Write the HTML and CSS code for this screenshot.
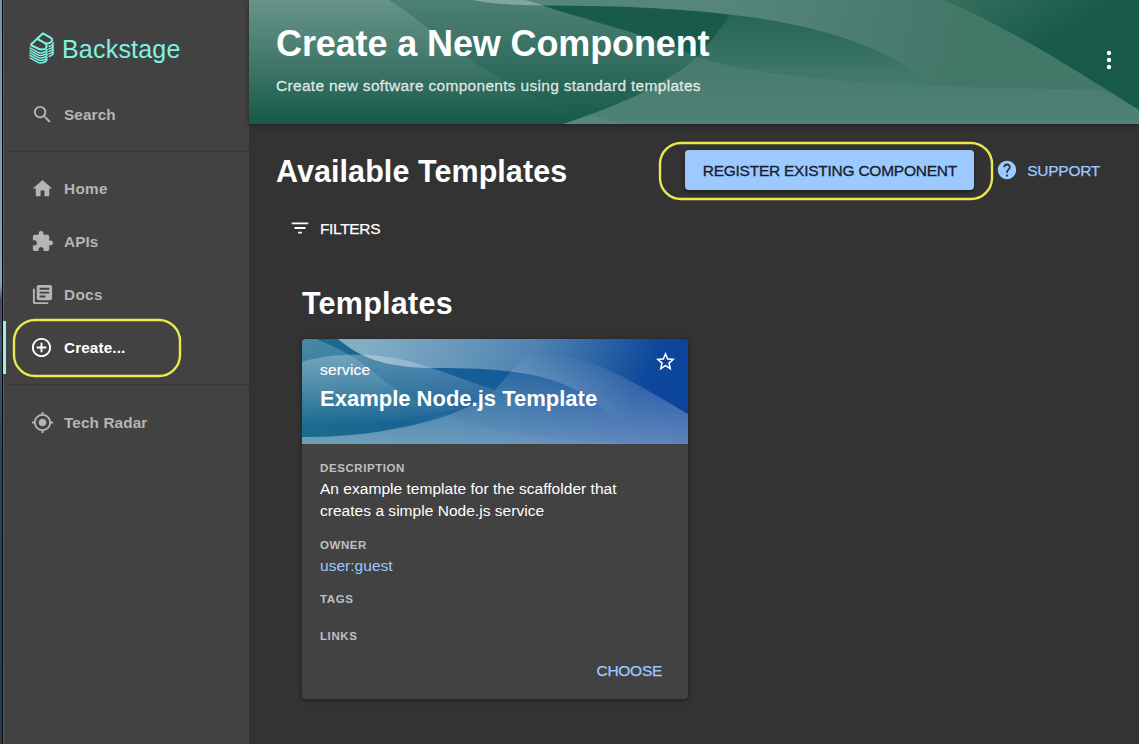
FILE: index.html
```html
<!DOCTYPE html>
<html lang="en">
<head>
<meta charset="utf-8">
<title>Create a New Component</title>
<link rel="stylesheet" href="styles.css">
</head>
<body>
<div class="app">
  <div class="desktop-edge"></div>
  <aside class="sidebar">
    <div class="logo">
      <svg class="logo-mark" viewBox="0 0 26 32" width="26" height="32">
        <g fill="none" stroke="#7df3e1">
          <path stroke-width="2" stroke-linejoin="round" d="M1.500 13 14 1.300 21.800 5.800C25.200 8 22 11.800 17 11.600L8.500 7M15 10.700C19.500 13 18 17.600 13 17.600 11.500 17.600 10 17 9 16.500L1.500 13"/>
          <g stroke-width="1.450">
            <path d="M.5 15.600 8.600 20.200C12 22 18 20.400 18.200 17"/>
            <path d="M.5 18.100 8.600 22.700C12 24.500 18 22.900 18.200 19.500"/>
            <path d="M.5 20.600 8.600 25.200C12 27 18 25.400 18.200 22"/>
            <path d="M.5 23.100 8.600 27.700C12 29.500 18 27.900 18.200 24.500"/>
            <path d="M.5 25.600 8.600 30.200C12 32 17.500 30.400 18.200 27"/>
            <path d="M19.500 14.500C22 14 24.300 12.700 24.500 10.200M19.500 17C22 16.500 24.300 15.200 24.500 12.700M19.500 19.500C22 19 24.300 17.700 24.500 15.200M19.500 22C22 21.500 24.300 20.200 24.500 17.700M19.500 24.500C22 24 24.300 22.700 24.500 20.200"/>
          </g>
        </g>
      </svg>
      <span class="logo-text">Backstage</span>
    </div>
    <a class="item search"><svg viewBox="0 0 24 24"><path d="M15.500 14h-.79l-.28-.27A6.471 6.471 0 0 0 16 9.500 6.500 6.500 0 1 0 9.500 16c1.610 0 3.090-.59 4.230-1.570l.27.28v.79l5 4.990L20.490 19l-4.990-5zm-6 0C7.010 14 5 11.990 5 9.500S7.010 5 9.500 5 14 7.010 14 9.500 11.990 14 9.500 14z"/></svg><span>Search</span></a>
    <div class="rule"></div>
    <nav class="nav">
      <a class="item"><svg viewBox="0 0 24 24"><path d="M10 20v-6h4v6h5v-8h3L12 3 2 12h3v8z"/></svg><span class="wide">Home</span></a>
      <a class="item"><svg viewBox="0 0 24 24"><path d="M20.500 11H19V7c0-1.100-.9-2-2-2h-4V3.500a2.500 2.500 0 0 0-5 0V5H4c-1.100 0-1.990.9-1.990 2v3.800H3.500c1.490 0 2.700 1.210 2.700 2.700s-1.210 2.700-2.700 2.700H2V20c0 1.100.9 2 2 2h3.800v-1.500c0-1.490 1.210-2.700 2.700-2.700s2.700 1.210 2.700 2.700V22H17c1.100 0 2-.9 2-2v-4h1.500a2.500 2.500 0 0 0 0-5z"/></svg><span>APIs</span></a>
      <a class="item"><svg viewBox="0 0 24 24"><path d="M4 6H2v14c0 1.100.9 2 2 2h14v-2H4V6zm16-4H8c-1.100 0-2 .9-2 2v12c0 1.100.9 2 2 2h12c1.100 0 2-.9 2-2V4c0-1.100-.9-2-2-2zm-1 9H9V9h10v2zm-4 4H9v-2h6v2zm4-8H9V5h10v2z"/></svg><span class="wide">Docs</span></a>
      <a class="item active"><svg viewBox="0 0 24 24"><path d="M13 7h-2v4H7v2h4v4h2v-4h4v-2h-4V7zm-1-5C6.480 2 2 6.480 2 12s4.480 10 10 10 10-4.480 10-10S17.520 2 12 2zm0 18c-4.410 0-8-3.590-8-8s3.590-8 8-8 8 3.590 8 8-3.590 8-8 8z"/></svg><span>Create...</span></a>
    </nav>
    <div class="rule"></div>
    <a class="item radar"><svg viewBox="0 0 24 24"><path d="M12 8c-2.210 0-4 1.790-4 4s1.790 4 4 4 4-1.790 4-4-1.790-4-4-4zm8.940 3A8.994 8.994 0 0 0 13 3.060V1h-2v2.060A8.994 8.994 0 0 0 3.060 11H1v2h2.060A8.994 8.994 0 0 0 11 20.940V23h2v-2.060A8.994 8.994 0 0 0 20.940 13H23v-2h-2.060zM12 19c-3.870 0-7-3.130-7-7s3.130-7 7-7 7 3.130 7 7-3.130 7-7 7z"/></svg><span>Tech Radar</span></a>
    <svg class="mark mark-create" width="172" height="62"><rect x="3" y="3" width="166" height="56" rx="21"/></svg>
  </aside>

  <main class="main">
    <header class="header">
      <svg class="waves" viewBox="249 0 890 124" preserveAspectRatio="none">
        <defs>
          <linearGradient id="h1" x1="0" y1="0" x2="0" y2="124" gradientUnits="userSpaceOnUse"><stop stop-color="#fff" stop-opacity=".15"/><stop offset=".94" stop-color="#fff" stop-opacity="0"/></linearGradient>
          <linearGradient id="h2" x1="0" y1="0" x2="0" y2="124" gradientUnits="userSpaceOnUse"><stop stop-color="#fff" stop-opacity=".23"/><stop offset="1" stop-color="#fff" stop-opacity="0"/></linearGradient>
          <linearGradient id="h3" x1="0" y1="8" x2="0" y2="90" gradientUnits="userSpaceOnUse"><stop stop-color="#fff" stop-opacity=".05"/><stop offset="1" stop-color="#fff" stop-opacity=".2"/></linearGradient>
          <linearGradient id="h4" x1="730" y1="0" x2="960" y2="50" gradientUnits="userSpaceOnUse"><stop stop-color="#56867a"/><stop offset="1" stop-color="#437768"/></linearGradient>
          <linearGradient id="h5" x1="950" y1="-10" x2="1000" y2="75" gradientUnits="userSpaceOnUse"><stop stop-color="#38705f"/><stop offset="1" stop-color="#175a4a"/></linearGradient>
          <linearGradient id="h6" x1="0" y1="60" x2="0" y2="124" gradientUnits="userSpaceOnUse"><stop stop-color="#477b6d"/><stop offset="1" stop-color="#4f8275"/></linearGradient>
        </defs>
        <path fill="#185b4b" d="M249 0H1139V124H249z"/>
        <path fill="url(#h2)" d="M249 0H525C590 22 650 34 697 57C665 85 620 105 563 124H249z"/>
        <path fill="url(#h1)" d="M249 0H389C410 13 430 30 449 45C500 83 560 111 610 124H249z"/>
        <path fill="url(#h5)" d="M930 0H1139V124H1000z"/>
        <path fill="url(#h3)" d="M741 0C728 17 715 38 697 57C765 77 870 84 942 87V0z"/>
        <path fill="url(#h4)" d="M473 0C505 7 550 5 595 6C680 8 800 15 875 50C915 68 935 84 950 107L960 124H1139V110C1080 73 1010 28 944 0z"/>
        <path fill="url(#h6)" d="M563 124C620 105 665 85 697 57C765 77 870 84 962 87L1104 90L1139 110V124z"/>
        <path fill="#83a69b" d="M473 0H525L544 5.300C515 5 490 4 473 0z"/>
        <path fill="#fff" opacity=".05" d="M563 124 592 115 620 124z"/>
      </svg>
      <div class="header-text">
        <h1>Create a New Component</h1>
        <p>Create new software components using standard templates</p>
      </div>
      <svg class="more" viewBox="0 0 6 20" width="6" height="20"><circle cx="3" cy="3" r="2.200"/><circle cx="3" cy="10" r="2.200"/><circle cx="3" cy="17" r="2.200"/></svg>
    </header>
    <section class="content">
      <div class="toolbar">
        <h2>Available Templates</h2>
        <button class="register">REGISTER EXISTING COMPONENT</button>
        <a class="support"><svg viewBox="0 0 24 24"><path d="M12 2C6.480 2 2 6.480 2 12s4.480 10 10 10 10-4.480 10-10S17.520 2 12 2zm1 17h-2v-2h2v2zm2.070-7.750l-.9.920C13.450 12.900 13 13.500 13 15h-2v-.5c0-1.100.45-2.100 1.170-2.830l1.240-1.260c.37-.36.59-.86.59-1.410 0-1.100-.9-2-2-2s-2 .9-2 2H8c0-2.210 1.790-4 4-4s4 1.790 4 4c0 .88-.36 1.680-.93 2.250z"/></svg><span>SUPPORT</span></a>
        <svg class="mark mark-register" width="338" height="62"><rect x="3" y="3" width="332" height="56" rx="21"/></svg>
      </div>
      <div class="filters"><svg viewBox="0 0 24 24"><path d="M10 18h4v-2h-4v2zM3 6v2h18V6H3zm3 7h12v-2H6v2z"/></svg><span>FILTERS</span></div>
      <h2 class="section-title">Templates</h2>
      <article class="card">
        <div class="card-head">
          <svg class="waves" viewBox="0 0 386 105" preserveAspectRatio="none">
            <defs>
              <linearGradient id="c0"><stop stop-color="#1b6c8e"/><stop offset=".5" stop-color="#155c98"/><stop offset="1" stop-color="#0b439c"/></linearGradient>
              <linearGradient id="c1" x1="0" y1="0" x2="0" y2="105" gradientUnits="userSpaceOnUse"><stop stop-color="#fff" stop-opacity=".2"/><stop offset=".85" stop-color="#fff" stop-opacity="0"/></linearGradient>
              <linearGradient id="c2" x1="0" y1="12" x2="0" y2="85" gradientUnits="userSpaceOnUse"><stop stop-color="#fff" stop-opacity=".28"/><stop offset="1" stop-color="#fff" stop-opacity="0"/></linearGradient>
              <linearGradient id="c3" x1="70" y1="0" x2="340" y2="130" gradientUnits="userSpaceOnUse"><stop stop-color="#fff" stop-opacity=".46"/><stop offset=".5" stop-color="#fff" stop-opacity=".26"/><stop offset=".88" stop-color="#fff" stop-opacity="0"/></linearGradient>
              <linearGradient id="c4" x1="0" y1="12" x2="0" y2="105" gradientUnits="userSpaceOnUse"><stop stop-color="#fff" stop-opacity="0"/><stop offset=".35" stop-color="#fff" stop-opacity=".14"/><stop offset="1" stop-color="#fff" stop-opacity=".34"/></linearGradient>
            </defs>
            <path fill="url(#c0)" d="M0 0H386V105H0z"/>
            <path fill="url(#c1)" d="M0 0H14C32 7 47 15 60 24C75 36 82 42 100 54C115 63 130 69 160 69L0 98z"/>
            <path fill="url(#c2)" d="M0 23C25 14 72 13 106 22C140 31 166 43 193 51C165 78 80 99 0 98z"/>
            <path fill="url(#c3)" d="M36 0C57 18 82 28 126 29C160 29 206 29 243 39C275 48 300 65 310 80L386 76V0z"/>
            <path fill="url(#c4)" d="M0 98C80 99 165 78 193 51C203 40 211 30 221 19C275 10 300 24 386 75V105H0z"/>
            <path fill="#fff" opacity=".04" d="M143 74C205 101 280 101 343 105H0V98C50 99 100 91 143 74z"/>
          </svg>
          <div class="card-heading">
            <div class="kind">service</div>
            <div class="name">Example Node.js Template</div>
          </div>
          <svg class="star" viewBox="0 0 24 24"><path d="M22 9.240l-7.190-.62L12 2 9.190 8.630 2 9.240l5.460 4.730L5.820 21 12 17.270 18.180 21l-1.630-7.030L22 9.240zM12 15.400l-3.760 2.270 1-4.280-3.320-2.880 4.380-.38L12 6.100l1.710 4.040 4.380.38-3.320 2.880 1 4.280L12 15.400z"/></svg>
        </div>
        <div class="card-body">
          <h3>DESCRIPTION</h3>
          <p>An example template for the scaffolder that<br>creates a simple Node.js service</p>
          <h3 class="k-owner">OWNER</h3>
          <p><a class="owner">user:guest</a></p>
          <h3 class="k-tags">TAGS</h3>
          <h3 class="k-links">LINKS</h3>
          <div class="actions"><a>CHOOSE</a></div>
        </div>
      </article>
    </section>
  </main>
</div>
</body>
</html>
```
FILE: styles.css
```css
* { box-sizing: border-box; }
body { margin: 0; background: #333; color: #fff; font-family: "Liberation Sans", Arial, sans-serif; overflow: hidden; }
h1, h2, h3, p { margin: 0; }
svg { display: block; flex: none; }
span { white-space: nowrap; }
.app { display: flex; width: 1139px; height: 744px; }

.desktop-edge { width: 4px; flex: none; border-right: 1px solid #5c5c5c; background: linear-gradient(90deg, transparent 2px, #050505 2px), linear-gradient(#7895b2 0, #87a3b8 285px, #454b5c 300px, #3d5777 345px, #2c4464 450px, #26394f 744px); }
.sidebar { position: relative; width: 245px; flex: none; background: #424242; display: flex; flex-direction: column; }
.logo { height: 88px; padding: 32px 0 0 25px; display: flex; gap: 7px; }
.logo-text { color: #7df3e1; font-size: 25px; line-height: 35px; letter-spacing: .2px; }
.item { height: 53px; padding-left: 27px; display: flex; align-items: center; gap: 10px; color: #b5b5b5; font-size: 15.300px; font-weight: bold; letter-spacing: .12px; }
.item .wide { letter-spacing: .35px; }
.item svg { width: 23px; height: 23px; fill: currentColor; }
.rule { height: 1px; background: #383838; }
.search + .rule { margin-top: 10px; }
.nav { padding: 10px 0 10px; }
.item.active { color: #fff; box-shadow: inset 3px 0 #9bf0e1; margin-left: -1px; padding-left: 27px; gap: 11px; }
.radar { margin-top: 11px; }
.mark { position: absolute; fill: none; stroke: #e8e84f; stroke-width: 2.400; }
.mark-create { left: 7px; top: 317px; }

.main { flex: 1; min-width: 0; background: #333; display: flex; flex-direction: column; }
.header { position: relative; height: 124px; flex: none; display: flex; justify-content: space-between; padding: 22px 27px 0; box-shadow: 0 1px 6px rgba(0,0,0,.4); }
.waves { position: absolute; inset: 0; width: 100%; height: 100%; }
.header-text { position: relative; }
h1 { font-size: 36px; line-height: 44px; letter-spacing: -.12px; white-space: nowrap; }
.header p { margin-top: 11px; font-size: 15.500px; line-height: 18px; letter-spacing: .3px; color: rgba(255,255,255,.8); -webkit-text-stroke: .3px; }
.more { position: relative; margin-top: 28px; fill: #fff; }

.content { padding: 26px 39px 0 27px; }
.toolbar { position: relative; display: flex; align-items: center; height: 40px; }
h2 { font-size: 30.500px; line-height: 42px; letter-spacing: .07px; height: 40px; }
.register { margin-left: auto; width: 289px; height: 40px; border: 0; padding: 1px 0 0; border-radius: 4px; background: #9cc9ff; color: #16202c; font: 15.500px/39px "Liberation Sans", Arial, sans-serif; letter-spacing: -.25px; -webkit-text-stroke: .3px; box-shadow: 0 2px 4px rgba(0,0,0,.4); }
.support { margin-left: 22px; display: flex; align-items: center; gap: 9px; color: #9cc9ff; font-size: 15.500px; letter-spacing: -.28px; -webkit-text-stroke: .25px; }
.support svg { width: 22px; height: 22px; fill: currentColor; stroke: none; }
.mark-register { left: 381px; top: -10px; }
.filters { margin: 27px 0 0 13px; height: 22px; display: flex; align-items: center; gap: 9px; font-size: 15.500px; letter-spacing: -.35px; -webkit-text-stroke: .25px; }
.filters svg { width: 22px; height: 22px; fill: #fff; stroke: none; }
.filters span, .support span { padding-top: 1px; }
.section-title { margin: 43px 0 0 26px; letter-spacing: .25px; }
.card { margin: 17px 0 0 26px; width: 386px; height: 360px; border-radius: 4px; overflow: hidden; background: #424242; box-shadow: 0 1px 4px rgba(0,0,0,.45); }
.card-head { position: relative; height: 105px; display: flex; justify-content: space-between; padding: 11px 11px 0 18px; }
.card-heading { position: relative; }
.kind { margin-top: 10px; font-size: 15.500px; line-height: 20px; letter-spacing: .15px; -webkit-text-stroke: .2px; }
.name { margin-top: 6px; font-size: 22px; line-height: 26px; font-weight: bold; }
.star { position: relative; width: 23px; height: 23px; fill: #fff; }
.card-body { padding: 17px 26px 0 18px; }
h3 { font-size: 11.500px; line-height: 14px; letter-spacing: .58px; color: #c0c0c0; }
.card p { font-size: 15.500px; line-height: 22px; margin-top: 3px; letter-spacing: .03px; white-space: nowrap; }
.k-owner { margin-top: 16px; }
.k-tags { margin-top: 15px; }
.k-links { margin-top: 23px; }
.owner, .actions { color: #9cc9ff; }
.actions { margin-top: 18px; display: flex; justify-content: flex-end; font-size: 15.500px; line-height: 20px; letter-spacing: -.28px; -webkit-text-stroke: .25px; }
```
